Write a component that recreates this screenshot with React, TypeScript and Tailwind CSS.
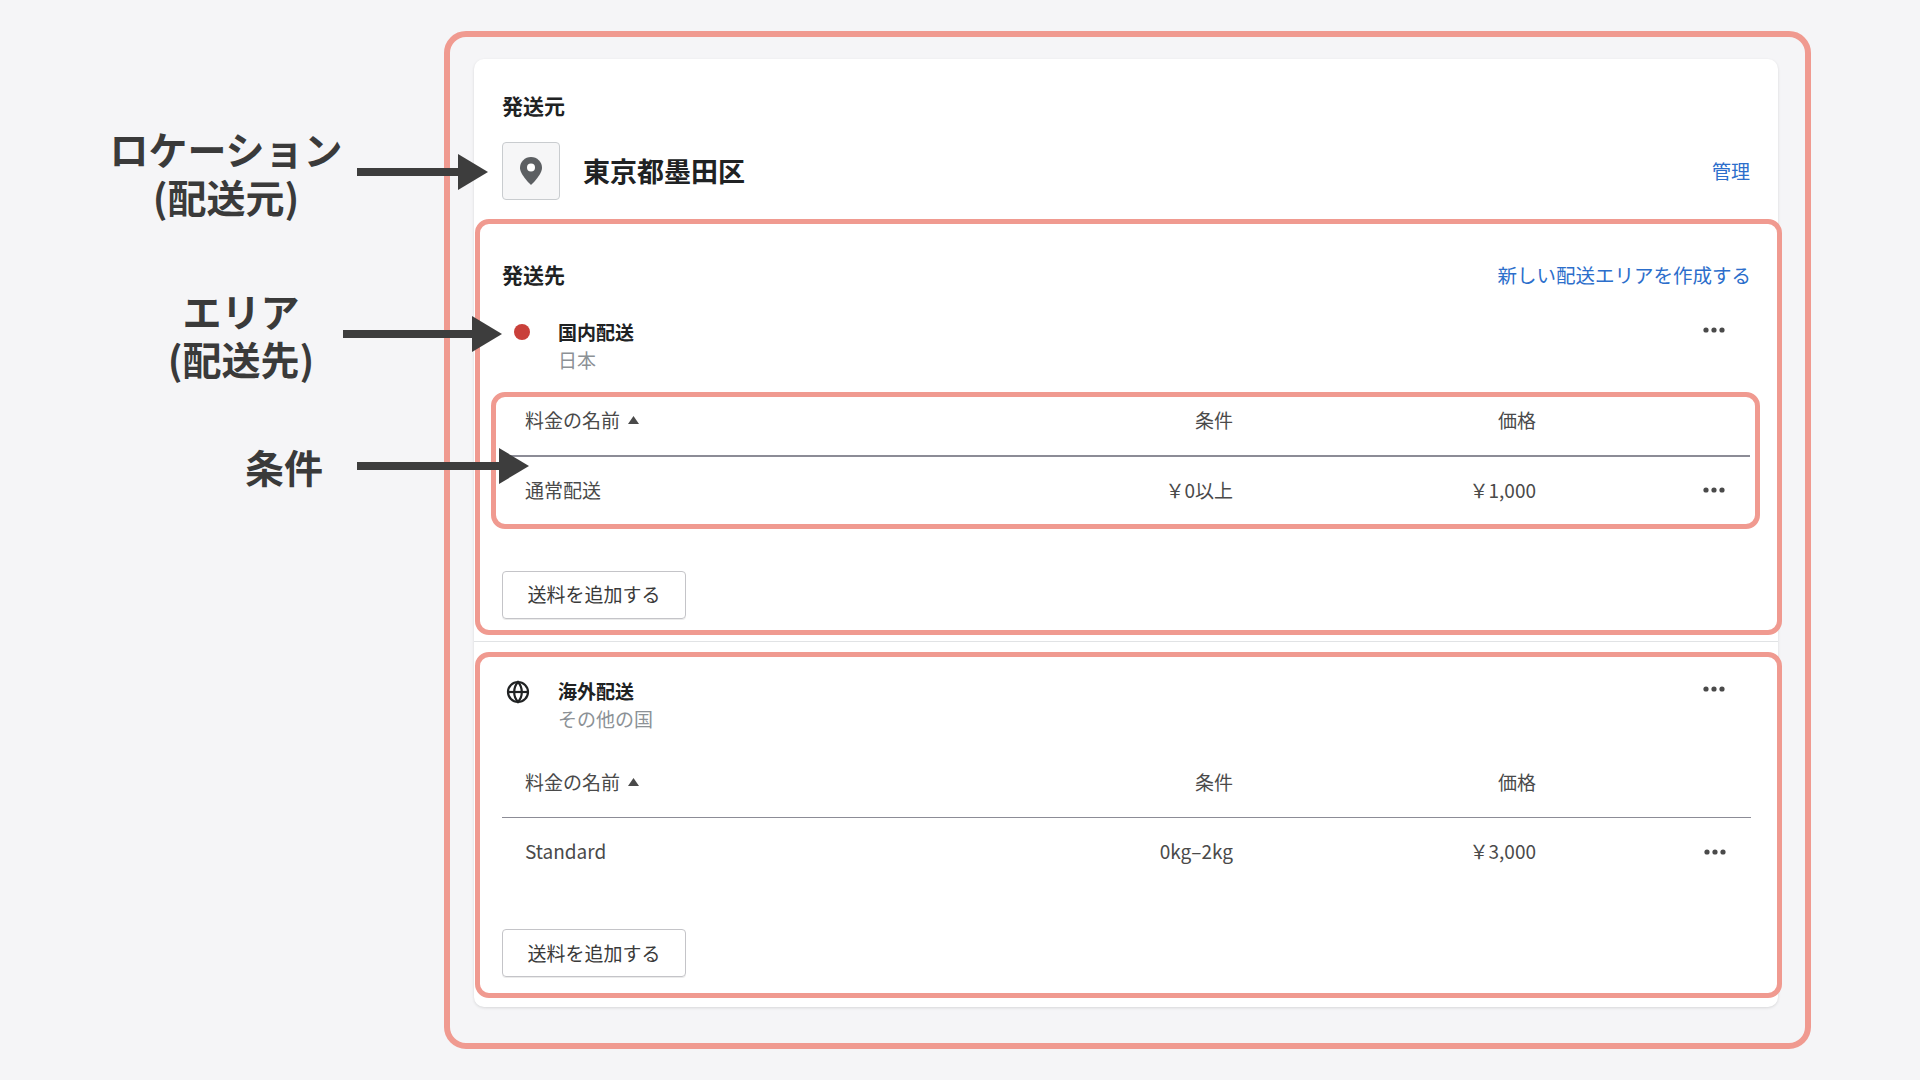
import React from "react";

const F = { fontFamily: '"Noto Sans CJK JP", "Noto Sans", sans-serif' };

function Arrow({ left, top, width }: { left: number; top: number; width: number }) {
  return (
    <svg className="absolute" style={{ left, top: top - 18, width, height: 36 }} viewBox={`0 0 ${width} 36`}>
      <rect x="0" y="14" width={width - 26} height="8" fill="#3d3d3d" />
      <polygon points={`${width - 30},0 ${width},18 ${width - 30},36`} fill="#3d3d3d" />
    </svg>
  );
}

function Dots() {
  return (
    <svg width="24" height="8" viewBox="0 0 24 8">
      <circle cx="4" cy="4" r="2.6" fill="#4a4a4a" />
      <circle cx="12" cy="4" r="2.6" fill="#4a4a4a" />
      <circle cx="20" cy="4" r="2.6" fill="#4a4a4a" />
    </svg>
  );
}

function Table({ name, cond, price }: { name: string; cond: string; price: string }) {
  return (
    <div className="text-[19px] text-[#4a4a4a]">
      <div className="flex h-[58px] items-start pt-[9px]">
        <div className="w-[531px] pl-[23px] flex items-center gap-2">
          料金の名前
          <svg width="11" height="8" viewBox="0 0 11 8"><polygon points="5.5,0 11,8 0,8" fill="#4a4a4a" /></svg>
        </div>
        <div className="w-[200px] text-right">条件</div>
        <div className="w-[303px] text-right">価格</div>
      </div>
      <div className="h-[1.5px] bg-[#8c8c96]" />
      <div className="flex h-[67px] items-center">
        <div className="w-[531px] pl-[23px]">{name}</div>
        <div className="w-[200px] text-right">{cond}</div>
        <div className="w-[303px] text-right">{price}</div>
        <div className="flex-1 flex justify-end pr-[24px]"><Dots /></div>
      </div>
    </div>
  );
}

function AddButton() {
  return (
    <div className="w-[184px] h-[48px] border border-[#c4c4c8] rounded-[4px] flex items-center justify-center text-[19px] text-[#3a3a3a] shadow-[0_1px_0_rgba(0,0,0,0.08)]">
      送料を追加する
    </div>
  );
}

export default function App() {
  return (
    <div style={F} className="relative w-[1920px] h-[1080px] bg-[#f5f5f7] overflow-hidden">
      <div className="absolute left-[86px] top-[124px] w-[280px] text-center text-[39px] font-bold leading-[48px] text-[#3a3a3a]">
        <div>ロケーション</div>
        <div>(配送元)</div>
      </div>
      <div className="absolute left-[101px] top-[286px] w-[280px] text-center text-[39px] font-bold leading-[48px] text-[#3a3a3a]">
        <div>エリア</div>
        <div>(配送先)</div>
      </div>
      <div className="absolute left-[144px] top-[442px] w-[280px] text-center text-[39px] font-bold leading-[48px] text-[#3a3a3a]">
        条件
      </div>

      <div className="ml-[444px] mt-[31px] w-[1367px] h-[1018px] border-[6px] border-[#f09a90] rounded-[22px] pt-[22px] pl-[24px]">
        <div className="w-[1304px] bg-white rounded-[10px] shadow-[0_1px_3px_rgba(0,0,0,0.12)] pb-[9px]">
          <div className="px-[28px] pt-[33px]">
            <div className="text-[21px] font-bold text-[#202223] leading-[26px]">発送元</div>
            <div className="mt-[24px] flex items-center">
              <div className="w-[58px] h-[58px] border border-[#c9cccf] rounded-[4px] bg-[#f6f6f7] flex items-center justify-center">
                <svg width="22" height="28" viewBox="0 0 22 28">
                  <path d="M11 0C4.9 0 0 4.8 0 10.8 0 18 11 28 11 28s11-10 11-17.2C22 4.8 17.1 0 11 0z" fill="#5c5f62" />
                  <circle cx="11" cy="10.5" r="4" fill="#fff" />
                </svg>
              </div>
              <div className="ml-[23px] text-[27px] font-bold text-[#202223]">東京都墨田区</div>
              <div className="ml-auto text-[19px] text-[#2c6ecb]">管理</div>
            </div>
          </div>

          <div className="mt-[19px] ml-[1px] w-[1307px] border-[5px] border-[#f09a90] rounded-[14px] pl-[22px] pr-[26px] pt-[38px] pb-[11px]">
            <div className="flex items-center h-[26px]">
              <div className="text-[21px] font-bold text-[#202223]">発送先</div>
              <div className="ml-auto text-[19.5px] text-[#2c6ecb]">新しい配送エリアを作成する</div>
            </div>
            <div className="mt-[32px] flex">
              <div className="w-[16px] h-[16px] rounded-full bg-[#c9403a] mt-[4px] ml-[12px]" />
              <div className="ml-[28px]">
                <div className="text-[19px] font-bold text-[#202223] leading-[24px]">国内配送</div>
                <div className="text-[19px] text-[#8c9196] leading-[24px] mt-[4px]">日本</div>
              </div>
              <div className="ml-auto mr-[25px] pt-[6px]"><Dots /></div>
            </div>
            <div className="mt-[20px] -ml-[11px] w-[1269px] border-[5px] border-[#f09a90] rounded-[14px] pl-[6px] pr-[5px]">
              <Table name="通常配送" cond="￥0以上" price="￥1,000" />
            </div>
            <div className="mt-[42px]"><AddButton /></div>
          </div>

          <div className="h-[7px] border-b border-[#e1e3e5]" />

          <div className="mt-[10px] ml-[1px] w-[1307px] border-[5px] border-[#f09a90] rounded-[14px] pl-[22px] pr-[26px] pt-[22px] pb-[16px]">
            <div className="flex">
              <svg className="ml-[4px] mt-[1px]" width="24" height="24" viewBox="0 0 24 24" fill="none" stroke="#202223" strokeWidth="2.2">
                <circle cx="12" cy="12" r="10" />
                <path d="M2 12h20" />
                <path d="M12 2a15 15 0 0 1 0 20a15 15 0 0 1 0-20z" />
              </svg>
              <div className="ml-[28px]">
                <div className="text-[19px] font-bold text-[#202223] leading-[24px]">海外配送</div>
                <div className="text-[19px] text-[#8c9196] leading-[24px] mt-[4px]">その他の国</div>
              </div>
              <div className="ml-auto mr-[25px] pt-[6px]"><Dots /></div>
            </div>
            <div className="mt-[28px]">
              <Table name="Standard" cond="0kg–2kg" price="￥3,000" />
            </div>
            <div className="mt-[44px]"><AddButton /></div>
          </div>
        </div>
      </div>

      <Arrow left={357} top={172} width={131} />
      <Arrow left={343} top={334} width={159} />
      <Arrow left={357} top={466} width={172} />
    </div>
  );
}
